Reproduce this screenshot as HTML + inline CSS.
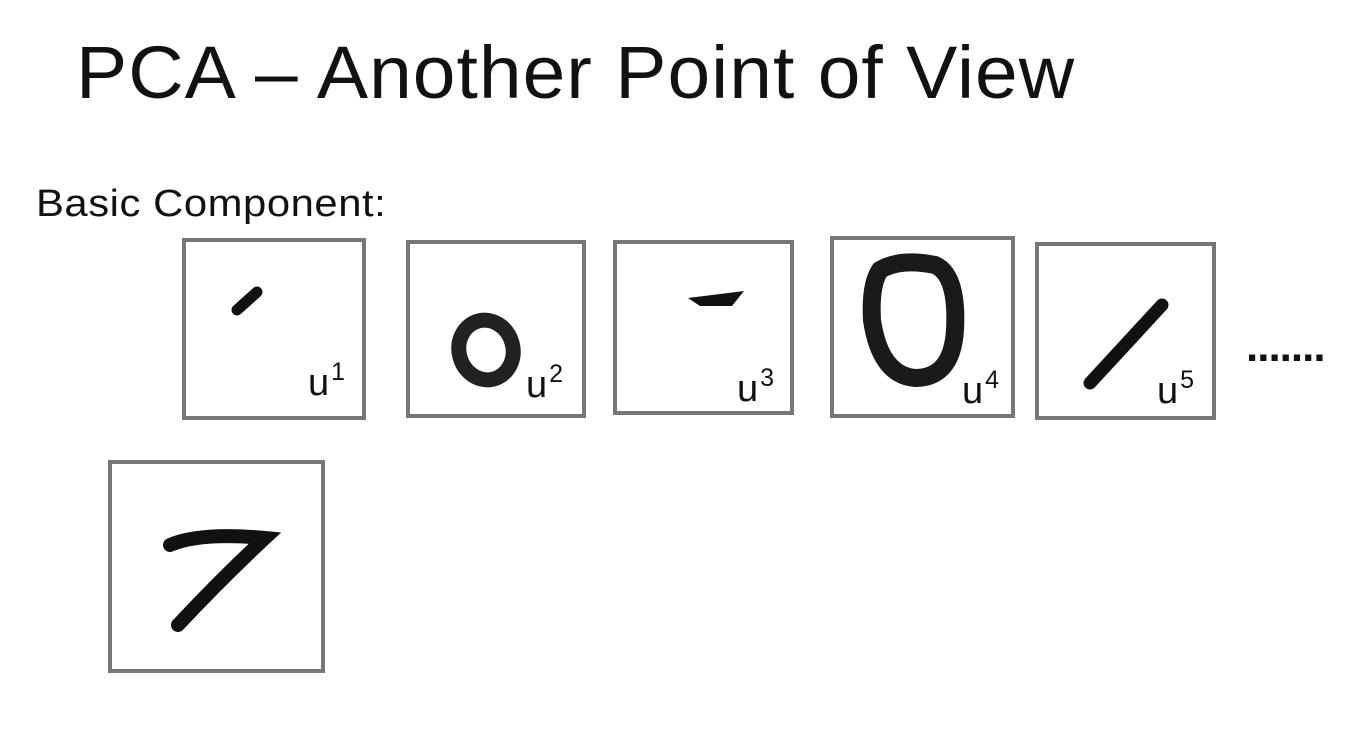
<!DOCTYPE html>
<html><head><style>
body{margin:0;width:1360px;height:752px;background:#fff;position:relative;overflow:hidden;font-family:"Liberation Sans",sans-serif;color:#111}
.t{position:absolute;left:76px;top:30px;font-size:74px;letter-spacing:1px;transform:scaleX(1.037);transform-origin:left top}
.s{position:absolute;left:36px;top:183px;font-size:38px;letter-spacing:0.5px;transform:scaleX(1.1);transform-origin:left top}
.b{position:absolute;border:4px solid #777;box-sizing:border-box;background:#fff}
.u{position:absolute;font-size:38px;}
.u sup{font-size:25px;vertical-align:15px;margin-left:2px}
svg{position:absolute;left:0;top:0}
</style></head><body>
<div class="t">PCA – Another Point of View</div>
<div class="s">Basic Component:</div>
<div class="b" style="left:182px;top:238px;width:184px;height:182px"></div>
<div class="b" style="left:406px;top:240px;width:180px;height:178px"></div>
<div class="b" style="left:613px;top:240px;width:181px;height:175px"></div>
<div class="b" style="left:830px;top:236px;width:185px;height:182px"></div>
<div class="b" style="left:1035px;top:242px;width:181px;height:178px"></div>
<div class="b" style="left:108px;top:460px;width:217px;height:213px"></div>
<svg width="1360" height="752">
<path d="M237 310 L257 292" stroke="#111" stroke-width="11" stroke-linecap="round"/>
<ellipse cx="486" cy="350" rx="27" ry="30" fill="none" stroke="#222" stroke-width="15" transform="rotate(-15 486 350)"/>
<path d="M688 298 L744 291 L732 306 L700 306 Z" fill="#111"/>
<path d="M880 270 Q900 258 935 265 Q958 275 955 330 Q952 378 915 378 Q880 375 872 320 Q870 285 880 270 Z" fill="none" stroke="#1a1a1a" stroke-width="18"/>
<path d="M1090 383 L1162 305" stroke="#111" stroke-width="13" stroke-linecap="round"/>
<path d="M170 545 Q200 532 265 538 Q220 580 178 625" fill="none" stroke="#111" stroke-width="14" stroke-linecap="round"/>
</svg>
<div class="u" style="left:308px;top:358px">u<sup>1</sup></div>
<div class="u" style="left:526px;top:360px">u<sup>2</sup></div>
<div class="u" style="left:737px;top:364px">u<sup>3</sup></div>
<div class="u" style="left:962px;top:366px">u<sup>4</sup></div>
<div class="u" style="left:1157px;top:366px">u<sup>5</sup></div>
<div class="u" style="left:1246px;top:322px;font-size:44px;font-weight:bold;letter-spacing:-1px">.......</div>
</body></html>
